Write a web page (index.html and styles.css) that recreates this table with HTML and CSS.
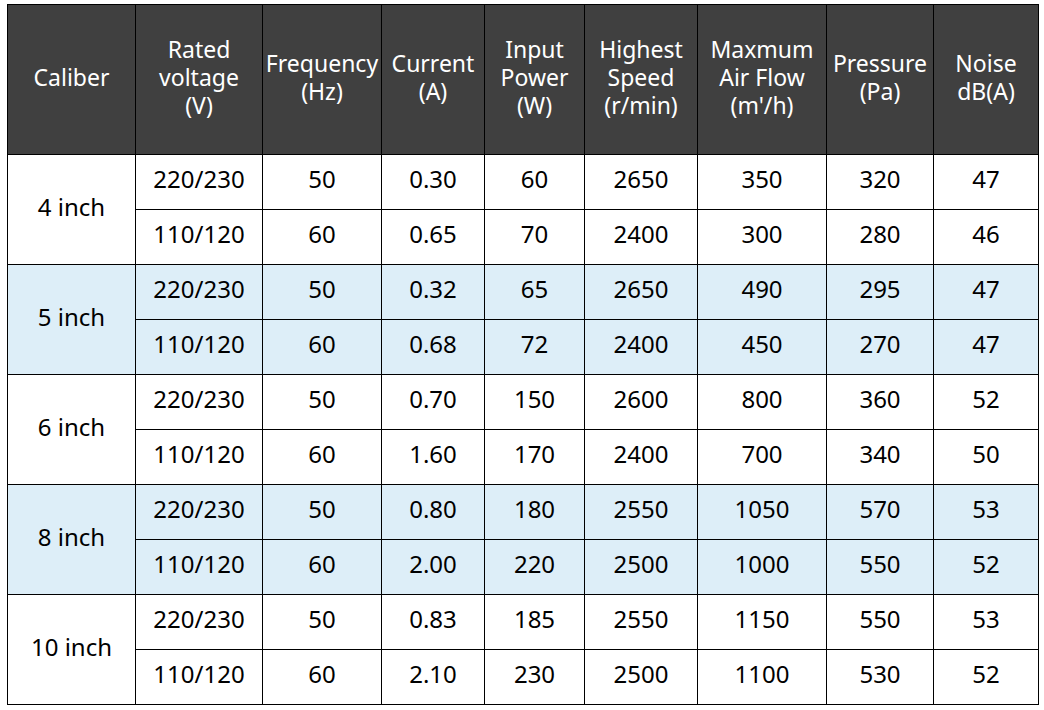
FILE: index.html
```html
<!DOCTYPE html>
<html>
<head>
<meta charset="utf-8">
<link rel="stylesheet" href="styles.css">
</head>
<body>
<table class="spec">
  <colgroup>
    <col class="c1"><col class="c2"><col class="c3"><col class="c4"><col class="c5"><col class="c6"><col class="c7"><col class="c8"><col class="c9">
  </colgroup>
  <thead>
    <tr>
      <th>Caliber</th>
      <th>Rated<br>voltage<br>(V)</th>
      <th>Frequency<br>(Hz)</th>
      <th>Current<br>(A)</th>
      <th>Input<br>Power<br>(W)</th>
      <th>Highest<br>Speed<br>(r/min)</th>
      <th>Maxmum<br>Air Flow<br>(m'/h)</th>
      <th>Pressure<br>(Pa)</th>
      <th>Noise<br>dB(A)</th>
    </tr>
  </thead>
  <tbody>
    <tr><td rowspan="2">4 inch</td><td>220/230</td><td>50</td><td>0.30</td><td>60</td><td>2650</td><td>350</td><td>320</td><td>47</td></tr>
    <tr><td>110/120</td><td>60</td><td>0.65</td><td>70</td><td>2400</td><td>300</td><td>280</td><td>46</td></tr>
    <tr class="alt"><td rowspan="2">5 inch</td><td>220/230</td><td>50</td><td>0.32</td><td>65</td><td>2650</td><td>490</td><td>295</td><td>47</td></tr>
    <tr class="alt"><td>110/120</td><td>60</td><td>0.68</td><td>72</td><td>2400</td><td>450</td><td>270</td><td>47</td></tr>
    <tr><td rowspan="2">6 inch</td><td>220/230</td><td>50</td><td>0.70</td><td>150</td><td>2600</td><td>800</td><td>360</td><td>52</td></tr>
    <tr><td>110/120</td><td>60</td><td>1.60</td><td>170</td><td>2400</td><td>700</td><td>340</td><td>50</td></tr>
    <tr class="alt"><td rowspan="2">8 inch</td><td>220/230</td><td>50</td><td>0.80</td><td>180</td><td>2550</td><td>1050</td><td>570</td><td>53</td></tr>
    <tr class="alt"><td>110/120</td><td>60</td><td>2.00</td><td>220</td><td>2500</td><td>1000</td><td>550</td><td>52</td></tr>
    <tr><td rowspan="2">10 inch</td><td>220/230</td><td>50</td><td>0.83</td><td>185</td><td>2550</td><td>1150</td><td>550</td><td>53</td></tr>
    <tr><td>110/120</td><td>60</td><td>2.10</td><td>230</td><td>2500</td><td>1100</td><td>530</td><td>52</td></tr>
  </tbody>
</table>
</body>
</html>
```

FILE: styles.css
```css
html, body {
  margin: 0;
  padding: 0;
  background: #ffffff;
}
body {
  padding: 4px 0 0 7px;
  font-family: "Noto Sans", "Open Sans", sans-serif;
}
.spec {
  border-collapse: collapse;
  table-layout: fixed;
  width: 1032px;
}
.c1 { width: 128px; }
.c2 { width: 127px; }
.c3 { width: 119px; }
.c4 { width: 103px; }
.c5 { width: 100px; }
.c6 { width: 113px; }
.c7 { width: 129px; }
.c8 { width: 107px; }
.c9 { width: 105px; }
.spec th, .spec td {
  border: 1px solid #000000;
  padding: 0 0 6px 0;
  text-align: center;
  vertical-align: middle;
  font-weight: normal;
  white-space: nowrap;
}
.spec th {
  background: #404040;
  color: #ffffff;
  font-size: 23px;
  height: 143px;
  line-height: 28px;
}
.spec td {
  color: #000000;
  font-size: 24px;
  height: 48px;
  line-height: 30px;
}
.spec tr.alt td {
  background: #ddeef8;
}
```
